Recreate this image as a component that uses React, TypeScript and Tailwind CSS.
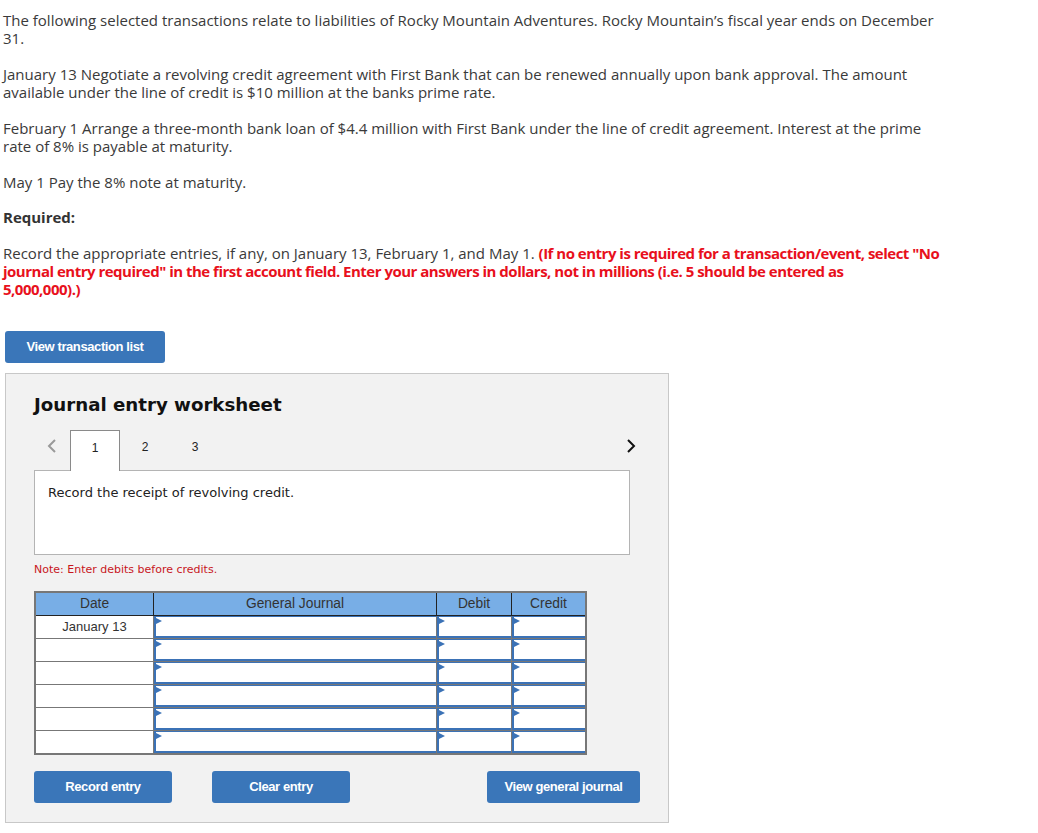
const bodyFont = { fontFamily: "'Open Sans', Lato, sans-serif" };

const Chevron = ({ dir, color }: { dir: "left" | "right"; color: string }) => (
  <svg width="10" height="16" viewBox="0 0 10 16" fill="none">
    <polyline
      points={dir === "left" ? "8,2 2,8 8,14" : "2,2 8,8 2,14"}
      stroke={color}
      strokeWidth="2"
    />
  </svg>
);

const InputCell = ({ width }: { width: string }) => (
  <div className={`${width} h-full border-r border-[#777] last:border-r-0`}>
    <div className="relative h-full border-l-2 border-b-2 border-t border-[#3b72b6] bg-white">
      <div className="absolute left-0 top-[1px] w-0 h-0 border-y-[3px] border-y-transparent border-l-[6px] border-l-[#3b72b6]" />
    </div>
  </div>
);

const BlueButton = ({ label, width }: { label: string; width: string }) => (
  <button
    className={`h-8 ${width} rounded-[3px] bg-[#3a76b9] text-white text-[13px] font-bold tracking-[-0.4px]`}
    style={{ fontFamily: "'Liberation Sans Narrow', 'Liberation Sans', Arial, sans-serif" }}
  >
    {label}
  </button>
);

export default function App() {
  const rows = ["January 13", "", "", "", "", ""];

  return (
    <div className="min-h-[833px] bg-white pl-[3px] pt-[11px] text-[#3a3a3a] text-[15px] leading-[18px]" style={bodyFont}>
      <p>
        The following selected transactions relate to liabilities of Rocky Mountain Adventures. Rocky Mountain’s fiscal year ends on December
        <br />
        31.
      </p>
      <p className="mt-[18px]">
        January 13 Negotiate a revolving credit agreement with First Bank that can be renewed annually upon bank approval. The amount
        <br />
        available under the line of credit is $10 million at the banks prime rate.
      </p>
      <p className="mt-[18px]">
        February 1 Arrange a three-month bank loan of $4.4 million with First Bank under the line of credit agreement. Interest at the prime
        <br />
        rate of 8% is payable at maturity.
      </p>
      <p className="mt-[18px]">May 1 Pay the 8% note at maturity.</p>
      <p className="mt-[17px] font-bold text-[#333]">Required:</p>
      <p className="mt-[18px]">
        Record the appropriate entries, if any, on January 13, February 1, and May 1.{" "}
        <span className="font-bold tracking-[-0.5px] text-[#e8101c]">
          (If no entry is required for a transaction/event, select "No
          <br />
          journal entry required" in the first account field. Enter your answers in dollars, not in millions (i.e. 5 should be entered as
          <br />
          5,000,000).)
        </span>
      </p>

      <div className="mt-[33px] ml-[2px]">
        <BlueButton label="View transaction list" width="w-[160px]" />
      </div>

      {/* Worksheet panel */}
      <div className="mt-[10px] ml-[2px] w-[664px] border border-[#c8c8c8] bg-[#f2f2f2] pl-[28px] pt-[20px] pb-[19px]">
        <h2
          className="text-[18.2px] leading-[22px] font-bold text-[#111]"
          style={{ fontFamily: "'DejaVu Sans', Verdana, sans-serif" }}
        >
          Journal entry worksheet
        </h2>

        {/* Tabs */}
        <div
          className="mt-[14px] flex w-[608px] items-end text-[12px] text-[#222]"
          style={{ fontFamily: "'Liberation Sans', Arial, sans-serif" }}
        >
          <div className="flex h-[40px] w-[36px] items-center justify-center pb-[8px]">
            <Chevron dir="left" color="#9a9a9a" />
          </div>
          <div className="relative -mb-px flex h-[41px] w-[50px] items-center justify-center border border-b-0 border-[#8a8a8a] bg-white pb-[6px]">
            1
          </div>
          <div className="flex h-[40px] w-[50px] items-center justify-center pb-[6px]">2</div>
          <div className="flex h-[40px] w-[50px] items-center justify-center pb-[6px]">3</div>
          <div className="flex-1" />
          <div className="flex h-[40px] w-[22px] items-center justify-center pb-[8px]">
            <Chevron dir="right" color="#111" />
          </div>
        </div>

        <div
          className="h-[85px] w-[596px] border border-[#b4b4b4] bg-white pl-[13px] pt-[13px] text-[13px] leading-[18px] text-[#222]"
          style={{ fontFamily: "'DejaVu Sans', Verdana, sans-serif" }}
        >
          Record the receipt of revolving credit.
        </div>

        <p
          className="mt-[8px] text-[11px] leading-[14px] text-[#c8161d]"
          style={{ fontFamily: "'DejaVu Sans', Verdana, sans-serif" }}
        >
          Note: Enter debits before credits.
        </p>

        {/* Journal grid */}
        <div
          className="mt-[14px] w-[553px] border-2 border-[#777] text-[#333]"
          style={{ fontFamily: "'Liberation Sans', Arial, sans-serif" }}
        >
          <div className="flex h-[23px] border-b border-[#222] bg-[#78aee6] text-[13.8px]">
            <div className="flex w-[118px] items-center justify-center border-r border-[#222]">Date</div>
            <div className="flex w-[283px] items-center justify-center border-r border-[#222]">General Journal</div>
            <div className="flex w-[75px] items-center justify-center border-r border-[#222]">Debit</div>
            <div className="flex flex-1 items-center justify-center">Credit</div>
          </div>
          {rows.map((date, i) => (
            <div key={i} className="flex h-[23px] border-b border-[#777] bg-white last:h-[22px] last:border-b-0">
              <div className="flex w-[118px] items-center justify-center border-r border-[#777] text-[13px]">{date}</div>
              <InputCell width="w-[283px]" />
              <InputCell width="w-[75px]" />
              <InputCell width="flex-1" />
            </div>
          ))}
        </div>

        {/* Actions */}
        <div className="mt-[16px] flex w-[606px]">
          <BlueButton label="Record entry" width="w-[138px]" />
          <div className="ml-[40px]">
            <BlueButton label="Clear entry" width="w-[138px]" />
          </div>
          <div className="flex-1" />
          <BlueButton label="View general journal" width="w-[153px]" />
        </div>
      </div>
    </div>
  );
}
